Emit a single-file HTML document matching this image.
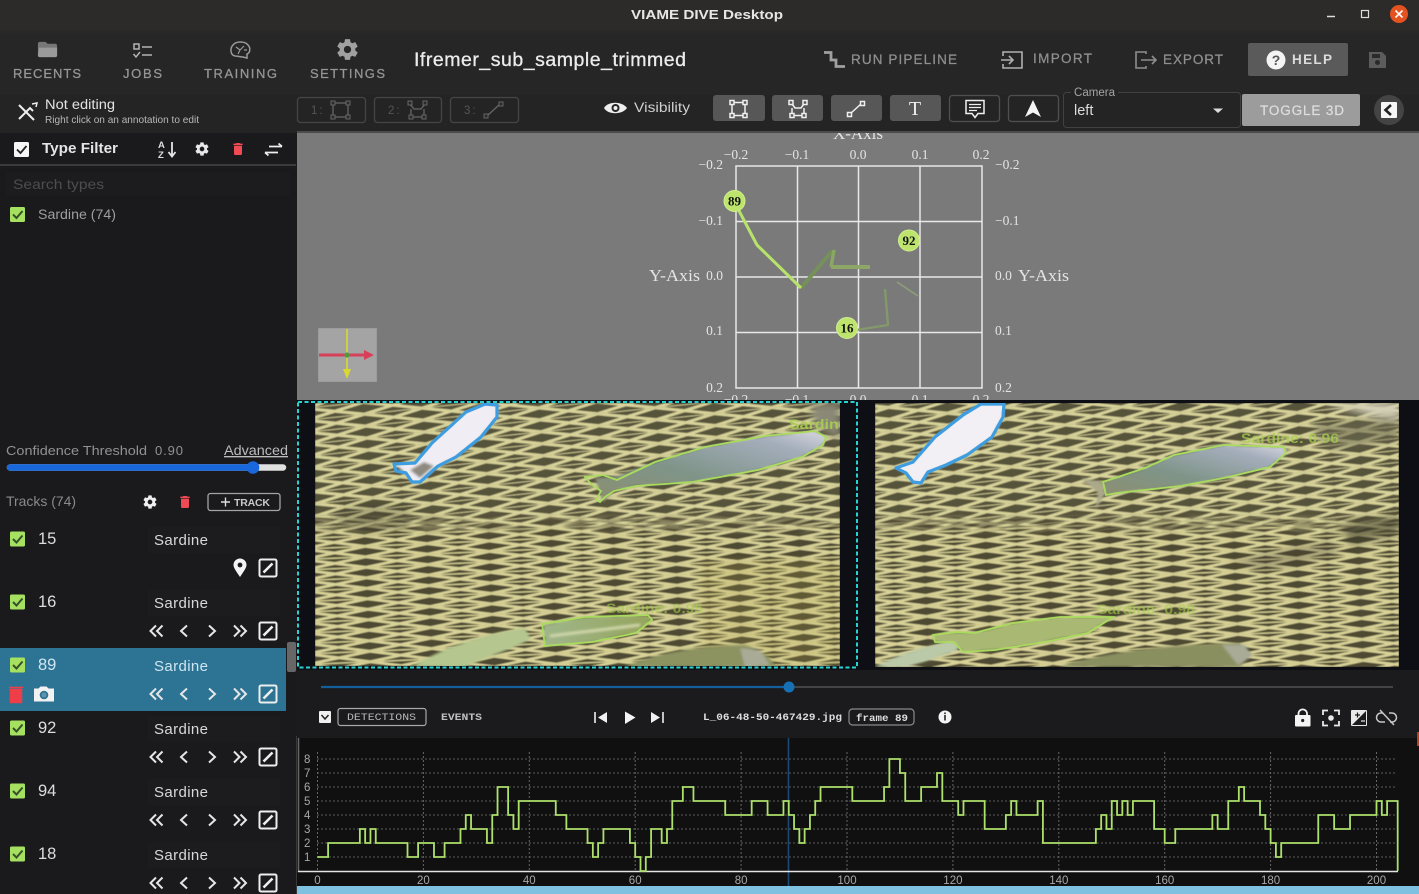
<!DOCTYPE html>
<html><head><meta charset="utf-8"><title>VIAME DIVE Desktop</title>
<style>
html,body{margin:0;padding:0;background:#1a1a1c;width:1419px;height:894px;overflow:hidden}
svg{display:block;position:absolute;left:0;top:0;filter:blur(.35px)}
text{font-family:"Liberation Sans",sans-serif}
.nav{font-size:13px;fill:#969696;stroke:#969696;stroke-width:.25px}
.act{font-size:13.5px;fill:#8f8f8f;stroke:#8f8f8f;stroke-width:.25px}
.ser{font-family:"Liberation Serif",serif;fill:#e4e4e4;font-size:13.5px}
.mono{font-family:"Liberation Mono",monospace;fill:#ddd;font-size:10px}
.num{font-size:16.5px;fill:#ddd}
.sar{font-size:15px;fill:#d8d8d8}
.ax{font-size:11.5px;fill:#a8a8a8}
.lbl{font-size:14px;fill:#a9d04e;font-weight:bold}
</style></head><body>
<svg width="1419" height="894" viewBox="0 0 1419 894" xmlns="http://www.w3.org/2000/svg">
<defs>
<symbol id="gear" viewBox="0 0 24 24"><path fill-rule="evenodd" d="M12,15.5A3.5,3.5 0 0,1 8.5,12A3.5,3.5 0 0,1 12,8.5A3.5,3.5 0 0,1 15.5,12A3.5,3.5 0 0,1 12,15.5M19.43,12.97C19.47,12.65 19.5,12.33 19.5,12C19.5,11.67 19.47,11.34 19.43,11L21.54,9.37C21.73,9.22 21.78,8.95 21.66,8.73L19.66,5.27C19.54,5.05 19.27,4.96 19.05,5.05L16.56,6.05C16.04,5.66 15.5,5.32 14.87,5.07L14.5,2.42C14.46,2.18 14.25,2 14,2H10C9.75,2 9.54,2.18 9.5,2.42L9.13,5.07C8.5,5.32 7.96,5.66 7.44,6.05L4.95,5.05C4.73,4.96 4.46,5.05 4.34,5.27L2.34,8.73C2.21,8.95 2.27,9.22 2.46,9.37L4.57,11C4.53,11.34 4.5,11.67 4.5,12C4.5,12.33 4.53,12.65 4.57,12.97L2.46,14.63C2.27,14.78 2.21,15.05 2.34,15.27L4.34,18.73C4.46,18.95 4.73,19.03 4.95,18.95L7.44,17.94C7.96,18.34 8.5,18.68 9.13,18.93L9.5,21.58C9.54,21.82 9.75,22 10,22H14C14.25,22 14.46,21.82 14.5,21.58L14.87,18.93C15.5,18.67 16.04,18.34 16.56,17.94L19.05,18.95C19.27,19.03 19.54,18.95 19.66,18.73L21.66,15.27C21.78,15.05 21.73,14.78 21.54,14.63L19.43,12.97Z"/></symbol>
<symbol id="trash" viewBox="0 0 24 24"><path d="M19,4H15.5L14.5,3H9.5L8.5,4H5V6H19M6,19A2,2 0 0,0 8,21H16A2,2 0 0,0 18,19V7H6V19Z"/></symbol>
<g id="chk"><rect x="10" y="-7" width="15" height="15" rx="1.5" fill="#a6e060"/><path d="M13 .5L16.5 4L22.5-3" fill="none" stroke="#35502a" stroke-width="2"/></g>
<g id="edit"><rect x="259.5" y="-8.5" width="17" height="17" rx="1.5" fill="none" stroke="#eee" stroke-width="2"/><path d="M263.5 4.5L272.5-4.5" stroke="#eee" stroke-width="2.6"/></g>
<g id="ctl" fill="none" stroke="#e6e6e6" stroke-width="2"><path d="M156-5.5L150.5 0L156 5.5M162.5-5.5L157 0L162.5 5.5M187-5.5L181 0L187 5.5M209 -5.5L215 0L209 5.5M234-5.5L239.5 0L234 5.5M240.5-5.5L246 0L240.5 5.5"/><use href="#edit"/></g>
<pattern id="net" width="58" height="12" patternUnits="userSpaceOnUse" patternTransform="rotate(-6)">
<rect width="58" height="12" fill="#57523a"/>
<path d="M0 0L58 12M0 12L58 0M-58 0L58 24M0-12L116 12" stroke="#d8d39a" stroke-width="3"/>
<path d="M0 6H58" stroke="#c9c48e" stroke-width="1"/>
</pattern>
<pattern id="net2" width="62" height="10.500" patternUnits="userSpaceOnUse" patternTransform="rotate(-2.500)">
<rect width="62" height="10.500" fill="#4e4932"/>
<path d="M0 0L62 10.500M0 10.500L62 0" stroke="#d8d298" stroke-width="2.800"/>
<path d="M0 5.250H62" stroke="#cfc98e" stroke-width="1.400"/>
</pattern>
<linearGradient id="fg1" x1="0" y1="1" x2="1" y2="0"><stop offset="0" stop-color="#8c8f70"/><stop offset=".4" stop-color="#7f9488"/><stop offset=".8" stop-color="#a4adbb"/><stop offset="1" stop-color="#d8d8e0"/></linearGradient>
<linearGradient id="fg2" x1="0" y1="0" x2="1" y2="0"><stop offset="0" stop-color="#9fb68a"/><stop offset="1" stop-color="#95a45c"/></linearGradient>
<linearGradient id="fade" x1="0" y1="0" x2="0" y2="1"><stop offset=".42" stop-color="#000"/><stop offset=".5" stop-color="#fff"/></linearGradient>
<mask id="mk" maskUnits="userSpaceOnUse" x="297" y="400" width="1122" height="270"><rect x="297" y="400" width="1122" height="270" fill="url(#fade)"/></mask>
<filter id="bl" x="-5%" y="-5%" width="110%" height="110%"><feGaussianBlur stdDeviation="1.300"/></filter>
<filter id="bl2" x="-5%" y="-5%" width="110%" height="110%"><feGaussianBlur stdDeviation="4"/></filter>
<filter id="bl3" x="0" y="0" width="100%" height="100%"><feGaussianBlur stdDeviation=".6"/></filter>
<clipPath id="cl"><rect x="315" y="403" width="525" height="263"/></clipPath>
<clipPath id="cr"><rect x="875" y="403" width="524" height="264"/></clipPath>
</defs>

<!-- base -->
<rect width="1419" height="894" fill="#1a1a1c"/>

<!-- plot -->
<rect x="297" y="132" width="1122" height="269" fill="#7a7a7a"/>
<g fill="none" stroke="#e8e8e8" stroke-width="1.500">
<rect x="736" y="166" width="246" height="222"/>
<path d="M797.500 166V388M858.500 166V388M920 166V388M736 221.500H982M736 277H982M736 332.500H982"/>
</g>
<text class="ser" x="858" y="139" text-anchor="middle" style="font-size:17px">X-Axis</text>
<g text-anchor="middle">
<text class="ser" x="736" y="159">−0.2</text><text class="ser" x="797" y="159">−0.1</text><text class="ser" x="858" y="159">0.0</text><text class="ser" x="920" y="159">0.1</text><text class="ser" x="981" y="159">0.2</text>
<text class="ser" x="736" y="404">−0.2</text><text class="ser" x="797" y="404">−0.1</text><text class="ser" x="858" y="404">0.0</text><text class="ser" x="920" y="404">0.1</text><text class="ser" x="981" y="404">0.2</text>
</g>
<g text-anchor="end">
<text class="ser" x="723" y="169">−0.2</text><text class="ser" x="723" y="225">−0.1</text><text class="ser" x="723" y="280">0.0</text><text class="ser" x="723" y="335">0.1</text><text class="ser" x="723" y="392">0.2</text>
</g>
<text class="ser" x="995" y="169">−0.2</text><text class="ser" x="995" y="225">−0.1</text><text class="ser" x="995" y="280">0.0</text><text class="ser" x="995" y="335">0.1</text><text class="ser" x="995" y="392">0.2</text>
<text class="ser" x="649" y="281" textLength="51" lengthAdjust="spacingAndGlyphs" style="font-size:17px">Y-Axis</text>
<text class="ser" x="1018" y="281" textLength="51" lengthAdjust="spacingAndGlyphs" style="font-size:17px">Y-Axis</text>
<g fill="none" stroke-linejoin="round">
<path d="M801 288L832 251" stroke="#76905a" stroke-width="4"/>
<path d="M834 250L831 267" stroke="#8aa860" stroke-width="3.500"/>
<path d="M831 267H870" stroke="#8ea766" stroke-width="4"/>
<path d="M885 289L888 325L850 331" stroke="#84996a" stroke-width="2.400"/>
<path d="M897 282L918 296" stroke="#8b9a78" stroke-width="1.800"/>
<path d="M737 207L757 245L801 288" stroke="#b8e36a" stroke-width="3"/>
</g>
<g fill="#bde46c" stroke="#d2ee8e" stroke-width="1"><ellipse cx="734.500" cy="201" rx="10.500" ry="10.500"/><ellipse cx="909" cy="240.500" rx="10.500" ry="10.500"/><ellipse cx="847" cy="328" rx="10.500" ry="10.500"/></g>
<g text-anchor="middle" font-weight="bold">
<text x="734.500" y="205.500" style="font-family:'Liberation Serif',serif;font-size:13px;fill:#111">89</text>
<text x="909" y="245" style="font-family:'Liberation Serif',serif;font-size:13px;fill:#111">92</text>
<text x="847" y="332.500" style="font-family:'Liberation Serif',serif;font-size:13px;fill:#111">16</text>
</g>
<!-- gizmo -->
<rect x="318" y="328" width="59" height="54" fill="#a4a4a4" filter="url(#bl3)"/>
<path d="M319 355H366" stroke="#d8405a" stroke-width="3"/><path d="M364 350L374 355L364 360Z" fill="#d8405a"/>
<path d="M347 329V372" stroke="#d8d830" stroke-width="1.600"/><path d="M343 369L347 379L351 369Z" fill="#d8d830"/>
<circle cx="347" cy="355" r="2.600" fill="#4f9a40"/>

<!-- title bar + toolbars -->
<rect width="1419" height="30" fill="#2c2b2a"/>
<rect y="30" width="1419" height="65" fill="#262626"/>
<rect y="95" width="1419" height="38" fill="#242424"/>
<rect y="30" width="1419" height="4" fill="#292827"/>
<rect x="297" y="131" width="1122" height="2" fill="#4c4c4c"/>
<text x="631" y="19" textLength="152" lengthAdjust="spacingAndGlyphs" font-weight="bold" style="font-size:13px;fill:#e6e6e6">VIAME DIVE Desktop</text>
<path d="M1327 16.500H1335" stroke="#ddd" stroke-width="1.500"/>
<rect x="1361.500" y="10.500" width="7" height="7" fill="none" stroke="#ddd" stroke-width="1.200"/>
<circle cx="1399" cy="14" r="9" fill="#e4521f"/><path d="M1395.500 10.500L1402.500 17.500M1402.500 10.500L1395.500 17.500" stroke="#fff" stroke-width="1.600"/>

<!-- nav -->
<svg x="36" y="38" width="23" height="23" viewBox="0 0 24 24"><path fill="#777" d="M10,4H4C2.89,4 2,4.89 2,6V18A2,2 0 0,0 4,20H20A2,2 0 0,0 22,18V8C22,6.89 21.1,6 20,6H12L10,4Z"/><path fill="#9a9a9a" d="M3 10H22V18A2 2 0 0 1 20 20H4A2 2 0 0 1 2 18Z"/></svg>
<g fill="none" stroke="#b4b4b4" stroke-width="1.500"><rect x="134" y="44" width="5" height="5"/><path d="M142 47H152M142 55H152M133.500 54L136 57L140 52"/></g>
<g fill="none" stroke="#999" stroke-width="1.500"><path d="M235 56C230 55 230 48 233 45C236 41 245 41 248 45C251 48 250 53 247 54V58L243 57C240 57 238 56 235 56Z"/><path d="M236 47L240 50L244 46M240 50L238 54M244 50L247 50" stroke-width="1.200"/></g>
<svg x="335" y="37" width="25" height="25" viewBox="0 0 24 24" fill="#a0a0a0"><use href="#gear"/></svg>
<text class="nav" x="13" y="78" textLength="68">RECENTS</text>
<text class="nav" x="123" y="78" textLength="39">JOBS</text>
<text class="nav" x="204" y="78" textLength="73">TRAINING</text>
<text class="nav" x="310" y="78" textLength="75">SETTINGS</text>
<text x="414" y="66" textLength="272" style="font-size:19.500px;fill:#ececec;stroke:#ececec;stroke-width:.3px">Ifremer_sub_sample_trimmed</text>

<!-- right actions -->
<path d="M824 52.500H831V60H836V66.500H845" fill="none" stroke="#a0a0a0" stroke-width="2.800"/>
<text class="act" x="851" y="64" textLength="106">RUN PIPELINE</text>
<g fill="none" stroke="#b0b0b0" stroke-width="1.600"><path d="M1003 56V52H1022V68H1003V64M1001 60H1013M1009 56L1013 60L1009 64"/></g>
<text class="act" x="1033" y="63" textLength="59">IMPORT</text>
<g fill="none" stroke="#8e8e8e" stroke-width="1.600"><path d="M1146 54V52H1136V68H1146V66M1141 60H1156M1152 56L1156 60L1152 64"/></g>
<text class="act" x="1163" y="64" textLength="60">EXPORT</text>
<rect x="1248" y="43" width="100" height="33" rx="2" fill="#5a5a5a"/>
<circle cx="1276" cy="60" r="9.500" fill="#f4f4f4"/>
<text x="1276" y="65" text-anchor="middle" font-weight="bold" style="font-size:14px;fill:#555">?</text>
<text class="act" x="1292" y="64" textLength="40" style="fill:#dcdcdc;stroke:none" font-weight="bold">HELP</text>
<path d="M1369 52H1382L1386 56V68H1369Z" fill="#5c5c5c"/><rect x="1372" y="54" width="8" height="4" fill="#2a2a2a"/><circle cx="1377.500" cy="62.500" r="2.500" fill="#2a2a2a"/>

<!-- row 2 -->
<g fill="none" stroke="#eee"><path d="M19 105L34 120" stroke-width="2"/><path d="M19 119L30 108L33 111" stroke-width="2"/><path d="M32 104L37 103L36 107" stroke-width="1.500"/></g>
<text x="45" y="109" textLength="70" lengthAdjust="spacingAndGlyphs" style="font-size:13.500px;fill:#e4e4e4">Not editing</text>
<text x="45" y="123" textLength="154" lengthAdjust="spacingAndGlyphs" style="font-size:10.500px;fill:#b8b8b8">Right click on an annotation to edit</text>
<g fill="none" stroke="#454545" stroke-width="1.300"><rect x="297.500" y="97.500" width="68" height="25" rx="3"/><rect x="374.500" y="97.500" width="67" height="25" rx="3"/><rect x="450.500" y="97.500" width="68" height="25" rx="3"/></g>
<text x="311" y="114" style="font-size:11.500px;fill:#555" letter-spacing="2">1:</text><text x="388" y="114" style="font-size:11.500px;fill:#555" letter-spacing="2">2:</text><text x="464" y="114" style="font-size:11.500px;fill:#555" letter-spacing="2">3:</text>
<g fill="none" stroke="#666" stroke-width="1.300"><rect x="333" y="103" width="15" height="14"/><path d="M409 103L414 109H421L426 103M411 117V109M424 117V109M410 117H425"/><path d="M487 116L500 104"/></g>
<g fill="#2a2a2a" stroke="#666" stroke-width="1"><rect x="331" y="101" width="4" height="4"/><rect x="346" y="101" width="4" height="4"/><rect x="331" y="115" width="4" height="4"/><rect x="346" y="115" width="4" height="4"/><rect x="408" y="101" width="4" height="4"/><rect x="423" y="101" width="4" height="4"/><rect x="409" y="115" width="4" height="4"/><rect x="422" y="115" width="4" height="4"/><rect x="484" y="114" width="4" height="4"/><rect x="499" y="102" width="4" height="4"/></g>
<path d="M604 108C608 101 622 101 627 108C622 115 608 115 604 108Z" fill="#eee"/><circle cx="615.500" cy="108" r="4" fill="#242424"/><circle cx="615.500" cy="108" r="2" fill="#eee"/>
<text x="634" y="112" textLength="56" lengthAdjust="spacingAndGlyphs" style="font-size:13.500px;fill:#cfcfcf">Visibility</text>
<g fill="#575757"><rect x="713" y="95" width="52" height="26" rx="3"/><rect x="772" y="95" width="51" height="26" rx="3"/><rect x="831" y="95" width="51" height="26" rx="3"/><rect x="890" y="95" width="51" height="26" rx="3"/></g>
<g fill="none" stroke="#4f4f4f" stroke-width="1.300"><rect x="949.500" y="95.500" width="50" height="26" rx="3"/><rect x="1008.500" y="95.500" width="50" height="26" rx="3"/></g>
<g fill="none" stroke="#f0f0f0" stroke-width="1.500"><rect x="732" y="102.500" width="13" height="13"/><path d="M791 102.500L795 108H801L805 102.500M792 115V108M804 115V108M790 115.500H806"/><path d="M850 114L862 103"/>
<rect x="730" y="100.500" width="4" height="4" fill="#575757"/><rect x="743" y="100.500" width="4" height="4" fill="#575757"/><rect x="730" y="113.500" width="4" height="4" fill="#575757"/><rect x="743" y="113.500" width="4" height="4" fill="#575757"/>
<rect x="789" y="100.500" width="4" height="4" fill="#575757"/><rect x="803" y="100.500" width="4" height="4" fill="#575757"/><rect x="790" y="113.500" width="4" height="4" fill="#575757"/><rect x="802" y="113.500" width="4" height="4" fill="#575757"/>
<rect x="847.500" y="112.500" width="4" height="4" fill="#575757"/><rect x="860.500" y="101.500" width="4" height="4" fill="#575757"/></g>
<text x="915" y="115" text-anchor="middle" style="font-family:'Liberation Serif',serif;font-size:20px;fill:#f0f0f0">T</text>
<path d="M966 100.500H984V113.500H978L975 117.500L972 113.500H966Z" fill="none" stroke="#f0f0f0" stroke-width="1.500"/><path d="M969 104.500H981M969 107.500H981M969 110.500H977" stroke="#f0f0f0" stroke-width="1.200"/>
<path d="M1033 100L1041 117L1033 112.500L1025 117Z" fill="#f4f4f4"/>
<rect x="1063.500" y="92.500" width="177" height="35" rx="3" fill="#242424" stroke="#414141"/>
<rect x="1071" y="90" width="47" height="6" fill="#242424"/>
<text x="1074" y="96" textLength="41" lengthAdjust="spacingAndGlyphs" style="font-size:11.500px;fill:#a4a4a4">Camera</text>
<text x="1074" y="115" style="font-size:14.500px;fill:#dcdcdc">left</text>
<path d="M1213 108.500H1223L1218 113Z" fill="#ddd"/>
<rect x="1242" y="94" width="118" height="32" rx="2" fill="#9c9c9c"/>
<text x="1260" y="115" textLength="84" style="font-size:13.500px;fill:#dedede;stroke:#dedede;stroke-width:.2px">TOGGLE 3D</text>
<circle cx="1389" cy="110" r="15" fill="#444"/>
<rect x="1381" y="102" width="16" height="16" rx="1" fill="#f6f6f6"/><path d="M1391 105L1385.500 110L1391 115" fill="none" stroke="#222" stroke-width="2.600"/>

<!-- sidebar -->
<rect x="0" y="133" width="297" height="761" fill="#1a1a1c"/>
<rect x="0" y="164" width="296" height="2" fill="#3a3a3a"/>
<rect x="14" y="142" width="15" height="15" rx="1.500" fill="#f6f6f6"/><path d="M17 149.500L20.500 153L26.500 146" fill="none" stroke="#222" stroke-width="1.800"/>
<text x="42" y="153" textLength="76" lengthAdjust="spacingAndGlyphs" font-weight="bold" style="font-size:14.500px;fill:#e4e4e4">Type Filter</text>
<text x="158" y="148" font-weight="bold" style="font-size:9.500px;fill:#ddd">A</text><text x="158" y="158" font-weight="bold" style="font-size:9.500px;fill:#ddd">Z</text>
<path d="M172 142V155M168.500 152L172 156.500L175.500 152" fill="none" stroke="#e4e4e4" stroke-width="1.800"/>
<svg x="194" y="141" width="16" height="16" viewBox="0 0 24 24" fill="#e8e8e8"><use href="#gear"/></svg>
<svg x="230" y="141" width="16" height="16" viewBox="0 0 24 24" fill="#f04a55"><use href="#trash"/></svg>
<path d="M269 146.500H282M278.500 143.500L282 146.500M265 152.500H278M268.500 155.500L265 152.500" fill="none" stroke="#eee" stroke-width="1.800"/>
<rect x="6" y="172" width="284" height="24" fill="#1c1c1e"/>
<text x="13" y="189" textLength="91" lengthAdjust="spacingAndGlyphs" style="font-size:14px;fill:#4d4d4d">Search types</text>
<use href="#chk" y="214"/>
<text x="38" y="219" textLength="78" lengthAdjust="spacingAndGlyphs" style="font-size:13.500px;fill:#9e9e9e">Sardine (74)</text>
<text x="6" y="455" textLength="141" lengthAdjust="spacingAndGlyphs" style="font-size:13px;fill:#929292">Confidence Threshold</text>
<text x="155" y="455" textLength="28" style="font-size:13px;fill:#929292">0.90</text>
<text x="224" y="455" textLength="64" lengthAdjust="spacingAndGlyphs" text-decoration="underline" style="font-size:13.500px;fill:#bdbdbd">Advanced</text>
<path d="M10 467.500H283" stroke="#e0e0e0" stroke-width="6.500" stroke-linecap="round"/>
<path d="M10 467.500H253" stroke="#1868dc" stroke-width="6.500" stroke-linecap="round"/>
<circle cx="253" cy="467.500" r="6.300" fill="#1868dc"/>
<text x="6" y="506" textLength="70" lengthAdjust="spacingAndGlyphs" style="font-size:14px;fill:#8a8a8a">Tracks (74)</text>
<svg x="142" y="494" width="16" height="16" viewBox="0 0 24 24" fill="#eee"><use href="#gear"/></svg>
<svg x="177" y="494" width="16" height="16" viewBox="0 0 24 24" fill="#f04a55"><use href="#trash"/></svg>
<rect x="208" y="493.500" width="72" height="17" rx="2.500" fill="none" stroke="#a4a4a4" stroke-width="1.300"/>
<path d="M221 502H230M225.500 497.500V506.500" stroke="#ddd" stroke-width="1.400"/>
<text x="234" y="506" textLength="36" font-weight="bold" style="font-size:10.500px;fill:#c8c8c8">TRACK</text>

<!-- track rows -->
<rect x="0" y="648" width="286" height="63" fill="#2c7394"/>
<rect x="287" y="642" width="9" height="30" rx="2" fill="#676767"/>
<rect x="296.500" y="736" width="1" height="158" fill="#555"/>
<rect x="148" y="527" width="132" height="26" fill="#1c1c1e"/><rect x="148" y="590" width="132" height="26" fill="#1c1c1e"/><rect x="148" y="716" width="132" height="26" fill="#1c1c1e"/><rect x="148" y="779" width="132" height="26" fill="#1c1c1e"/><rect x="148" y="842" width="132" height="26" fill="#1c1c1e"/>
<use href="#chk" y="538.500"/><text class="num" x="38" y="544">15</text><text class="sar" x="154" y="545" textLength="54">Sardine</text>
<use href="#chk" y="601.500"/><text class="num" x="38" y="607">16</text><text class="sar" x="154" y="608" textLength="54">Sardine</text>
<use href="#chk" y="664.500"/><text class="num" x="38" y="670" style="fill:#cfe6f0">89</text><text class="sar" x="154" y="671" textLength="54" style="fill:#cfe6f0">Sardine</text>
<use href="#chk" y="727.500"/><text class="num" x="38" y="733">92</text><text class="sar" x="154" y="734" textLength="54">Sardine</text>
<use href="#chk" y="790.500"/><text class="num" x="38" y="796">94</text><text class="sar" x="154" y="797" textLength="54">Sardine</text>
<use href="#chk" y="853.500"/><text class="num" x="38" y="859">18</text><text class="sar" x="154" y="860" textLength="54">Sardine</text>
<use href="#edit" y="568"/>
<path d="M240 577C236 571 233.500 567.500 233.500 565A6.500 6.500 0 0 1 246.500 565C246.500 567.500 244 571 240 577Z" fill="#f4f4f4"/><circle cx="240" cy="565" r="2.400" fill="#1a1a1c"/>
<use href="#ctl" y="631"/><use href="#ctl" y="694"/><use href="#ctl" y="757"/><use href="#ctl" y="820"/><use href="#ctl" y="883"/>
<path d="M9 687.500H23M10.500 689.500H21.500V702.500H10.500Z" fill="#ef3e48" stroke="#ef3e48" stroke-width="1.500"/>
<path d="M34 688.500H38.500L40.500 686.500H46.500L48.500 688.500H54V701.500H34Z" fill="#f2f2f2"/><circle cx="44" cy="695" r="4.300" fill="#2c7394"/><circle cx="44" cy="695" r="2.500" fill="#f2f2f2" opacity=".25"/>

<!-- videos -->
<rect x="297" y="400" width="1122" height="270" fill="#0e0f14"/>
<g clip-path="url(#cl)">
<g filter="url(#bl3)">
<rect x="315" y="403" width="525" height="263" fill="url(#net)"/>
<rect x="315" y="403" width="525" height="263" fill="url(#net2)" mask="url(#mk)"/>
</g>
<g filter="url(#bl2)">
<path d="M810 403H840V440L815 425Z" fill="#8a8876"/>
<ellipse cx="375" cy="518" rx="40" ry="14" fill="#2f2b1c" opacity=".25"/>
<path d="M700 560H840V666H700Z" fill="#b8a850" opacity=".18"/>
</g>
<g filter="url(#bl)">
<path d="M412 667C440 648 490 632 525 628L531 639C510 650 480 660 465 667Z" fill="#b5c68e"/>
<path d="M625 667C650 654 700 645 745 645C760 650 775 660 775 667Z" fill="#8c9260"/>
<path d="M740 648L760 650L770 665L745 667Z" fill="#a9ab96"/>
<path d="M543 625L585 617L648 615L652 620L636 633L592 642L545 646Z" fill="url(#fg2)"/>
<path d="M550 636L640 625" stroke="#d7ddb0" stroke-width="2.500"/>
<path d="M595 478L617 476L655 462L705 447L765 436L815 431L826 437L823 445L802 457L758 470L693 482L636 486L614 491L603 502Z" fill="url(#fg1)"/>
<path d="M395 465L415 463L432 443L466 412L485 404L497 405L497 417L481 437L456 457L438 466L420 482L412 482L406 473Z" fill="#f0edf4"/>
<path d="M410 470L424 462L434 466L420 478Z" fill="#8f8a80"/>
</g>
<g fill="none">
<path d="M585 477L603 475L617 480L655 462L705 447L765 436L815 431L826 437L823 445L802 457L758 470L693 482L636 486L614 491L605 497L600 502L596 500L601 491L591 484Z" stroke="#a9dc5d" stroke-width="1.800"/>
<path d="M542 624L585 617L648 615L652 620L636 633L592 642L545 646Z" stroke="#a9dc5d" stroke-width="1.800"/>
<path d="M394 464L415 463L432 443L466 412L485 404L497 405L497 417L481 437L456 457L438 466L420 482L412 482L406 473L396 471Z" stroke="#3d9de0" stroke-width="3.200" stroke-linejoin="round"/>
</g>
<text class="lbl" x="789" y="429" textLength="64" lengthAdjust="spacingAndGlyphs" opacity=".9">Sardine:</text>
<text class="lbl" x="606" y="613" textLength="97" lengthAdjust="spacingAndGlyphs" opacity=".6">Sardine: 0.95</text>
</g>
<rect x="298" y="402" width="559" height="265.500" fill="none" stroke="#27d2cf" stroke-width="2" stroke-dasharray="4 2.500"/>

<g clip-path="url(#cr)">
<g filter="url(#bl3)">
<rect x="875" y="403" width="524" height="264" fill="url(#net)"/>
<rect x="875" y="403" width="524" height="264" fill="url(#net2)" mask="url(#mk)"/>
</g>
<g filter="url(#bl2)">
<path d="M1320 403H1399V422Z" fill="#d4d0b8"/>
<path d="M1310 425L1399 416V440L1330 450Z" fill="#6b6850" opacity=".6"/>
<path d="M1340 525L1399 515V535L1350 545Z" fill="#3c3a2c" opacity=".55"/>
<path d="M1230 560L1330 540L1340 555L1260 572Z" fill="#3e3b2b" opacity=".3"/>
</g>
<g filter="url(#bl)">
<path d="M875 667C900 652 940 643 957 641L958 650C930 660 915 665 905 667Z" fill="#bac9a8"/>
<path d="M1060 667C1090 655 1160 644 1240 643L1252 654L1240 667Z" fill="#8a8f60"/>
<path d="M1222 645L1245 645L1252 656L1238 665Z" fill="#a9ab96"/>
<path d="M1081 478L1103 482L1105 494L1095 510L1098 493Z" fill="#aba98a"/>
<path d="M1103 482L1145 468L1174 455L1224 445L1284 447L1286 453L1270 467L1224 478L1181 486L1117 493L1106 495Z" fill="url(#fg1)"/>
<path d="M933 635L956 632L974 633L1013 623L1060 617L1113 617L1088 633L1045 642L995 650L963 652L954 642L935 642Z" fill="#a9b873"/>
<path d="M896 468L913 462L935 437L963 415L981 404L1004 404L1003 417L992 437L967 455L946 465L928 472L921 483L913 482L906 473Z" fill="#f2eff5"/>
</g>
<g fill="none">
<path d="M1103 482L1145 468L1174 455L1224 445L1284 447L1286 453L1270 467L1224 478L1181 486L1117 493L1106 495Z" stroke="#a9dc5d" stroke-width="1.800"/>
<path d="M933 635L956 632L974 633L1013 623L1060 617L1113 617L1088 633L1045 642L995 650L963 652L954 642L935 642Z" stroke="#a9dc5d" stroke-width="1.800"/>
<path d="M896 468L913 462L935 437L963 415L981 404L1004 404L1003 417L992 437L967 455L946 465L928 472L921 483L913 482L906 473Z" stroke="#3d9de0" stroke-width="3.200" stroke-linejoin="round"/>
</g>
<text class="lbl" x="1241" y="443" textLength="98" lengthAdjust="spacingAndGlyphs" opacity=".75">Sardine: 0.96</text>
<text class="lbl" x="1097" y="614" textLength="98" lengthAdjust="spacingAndGlyphs" opacity=".6">Sardine: 0.98</text>
</g>

<!-- controls -->
<rect x="297" y="670" width="1122" height="68" fill="#1b1b1d"/>
<path d="M321 687H1393" stroke="#444" stroke-width="2"/>
<path d="M321 687H789" stroke="#125f9c" stroke-width="2.200"/>
<circle cx="789" cy="687" r="5.500" fill="#1570b4"/>
<rect x="319" y="711" width="12" height="12" rx="1" fill="#f0f0f0"/><path d="M321.500 715L325 719L328.500 715" fill="none" stroke="#222" stroke-width="1.500"/>
<rect x="338" y="708.500" width="88" height="17" rx="2.500" fill="none" stroke="#a8a8a8" stroke-width="1.200"/>
<text class="mono" x="347" y="720" textLength="69" lengthAdjust="spacingAndGlyphs" style="fill:#b8b8b8">DETECTIONS</text>
<text class="mono" x="441" y="720" textLength="41" lengthAdjust="spacingAndGlyphs" style="fill:#c0c0c0" font-weight="bold">EVENTS</text>
<path d="M595 712V723" stroke="#f0f0f0" stroke-width="1.600"/><path d="M607 712V723L598 717.500Z" fill="#f0f0f0"/>
<path d="M625 711.500V724L635.500 717.500Z" fill="#f4f4f4"/>
<path d="M663 712V723" stroke="#f0f0f0" stroke-width="1.600"/><path d="M651 712V723L660 717.500Z" fill="#f0f0f0"/>
<text class="mono" x="703" y="720" textLength="139" lengthAdjust="spacingAndGlyphs" font-weight="bold">L_06-48-50-467429.jpg</text>
<rect x="849" y="709" width="65" height="16" rx="3.500" fill="none" stroke="#8a8a8a" stroke-width="1.200"/>
<text class="mono" x="856" y="721" textLength="52" lengthAdjust="spacingAndGlyphs" font-weight="bold">frame 89</text>
<circle cx="945" cy="717" r="6.500" fill="#f4f4f4"/><rect x="944.200" y="715" width="1.600" height="5.500" fill="#222"/><rect x="944.200" y="712.500" width="1.600" height="1.600" fill="#222"/>
<rect x="1295" y="715" width="15.500" height="11.500" rx="1" fill="#f4f4f4"/><path d="M1298.500 715V713A4.300 4.300 0 0 1 1307 713V715" fill="none" stroke="#f4f4f4" stroke-width="1.800"/><circle cx="1302.700" cy="720.500" r="1.600" fill="#222"/>
<g fill="none" stroke="#e8e8e8" stroke-width="1.800"><path d="M1323 715V710.500H1328M1334 710.500H1339V715M1339 721V725.500H1334M1328 725.500H1323V721"/></g><circle cx="1331" cy="718" r="2.800" fill="#e8e8e8"/>
<rect x="1351" y="710" width="16" height="16" rx="1" fill="#e8e8e8"/><path d="M1352 725L1366 711V725Z" fill="#1b1b1d"/><path d="M1355 715H1360M1357.500 712.500V717.500" stroke="#1b1b1d" stroke-width="1.200"/><path d="M1361 721H1365" stroke="#e8e8e8" stroke-width="1.200"/>
<path d="M1383 713H1381A4.500 4.500 0 0 0 1381 722H1385M1389 713H1392A4.500 4.500 0 0 1 1392 722H1390M1380 710L1394 725" fill="none" stroke="#c8c8c8" stroke-width="1.500"/>

<!-- chart -->
<rect x="297" y="738" width="1122" height="148" fill="#101010"/>
<path d="M298.500 738V872" stroke="#666" stroke-width="1.500"/>
<g stroke="#5c5c5c" stroke-width="1" stroke-dasharray="2 2" fill="none">
<path d="M317 759H1395M317 773H1395M317 787H1395M317 801H1395M317 815H1395M317 829H1395M317 843H1395M317 857H1395"/>
</g>
<g stroke="#666" stroke-width="1" stroke-dasharray="2 2" fill="none">
<path d="M317.500 752V871M423.400 752V871M529.300 752V871M635.200 752V871M741.100 752V871M847 752V871M952.900 752V871M1058.800 752V871M1164.700 752V871M1270.600 752V871M1376.500 752V871"/>
</g>
<path d="M788.500 738V886" stroke="#1d4a73" stroke-width="1.600"/>
<path d="M298 871.500H1398" stroke="#e4e4e4" stroke-width="1.500"/>
<path transform="translate(317.500 871) scale(5.295 -14)" vector-effect="non-scaling-stroke" fill="none" stroke="#aee06c" stroke-width="1.800" d="M0 1H2V2H8V3H9V2H10V3H11V2H17V1H19V2H22V1H24V2H27V3H28V4H29V3H32V2H33V4H34V6H36V4H37V3H38V5H45V4H47V3H51V2H52V1H53V2H54V3H59V2H60V1H61V0H62V1H63V3H65V2H66V3H67V5H69V6H71V5H77V4H82V5H85V4H88V5H89V4H90V3H91V2H92V3H93V4H94V5H95V6H101V5H107V6H108V8H110V7H111V5H114V6H117V7H118V5H121V4H122V5H126V3H130V4H131V5H132V4H136V5H137V2H147V3H148V4H149V3H150V5H151V4H152V5H153V4H154V5H158V3H160V2H162V3H169V4H170V3H172V5H174V6H175V5H178V4H179V3H180V2H181V1H182V2H189V4H192V3H195V4H200V5H201V4H202V5H204V0"/>
<text class="ax" x="304" y="763">8</text><text class="ax" x="304" y="777">7</text><text class="ax" x="304" y="791">6</text><text class="ax" x="304" y="805">5</text><text class="ax" x="304" y="819">4</text><text class="ax" x="304" y="833">3</text><text class="ax" x="304" y="847">2</text><text class="ax" x="304" y="861">1</text>
<g text-anchor="middle"><text class="ax" x="317.500" y="884">0</text><text class="ax" x="423.400" y="884">20</text><text class="ax" x="529.300" y="884">40</text><text class="ax" x="635.200" y="884">60</text><text class="ax" x="741.100" y="884">80</text><text class="ax" x="847" y="884">100</text><text class="ax" x="952.900" y="884">120</text><text class="ax" x="1058.800" y="884">140</text><text class="ax" x="1164.700" y="884">160</text><text class="ax" x="1270.600" y="884">180</text><text class="ax" x="1376.500" y="884">200</text></g>
<rect x="297" y="886" width="1122" height="8" fill="#7ec1e0"/>
<rect x="1417" y="732" width="2" height="14" fill="#b5411f"/>
</svg>
</body></html>
